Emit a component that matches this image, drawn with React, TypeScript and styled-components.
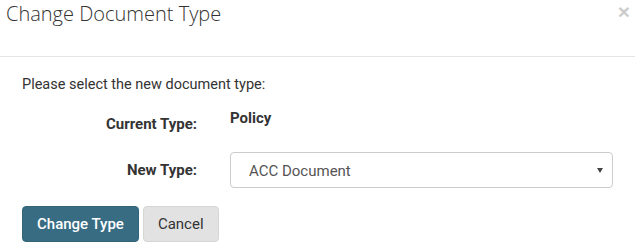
import styled, { createGlobalStyle } from 'styled-components'

const GlobalStyle = createGlobalStyle`
  html, body {
    margin: 0;
    padding: 0;
    background: #fff;
  }
  body {
    font-family: Roboto, 'Liberation Sans', sans-serif;
    font-size: 14px;
    line-height: 20px;
    color: #333;
  }
`

const Modal = styled.div`
  width: 635px;
  height: 252px;
  background: #fff;
  overflow: hidden;
`

const Header = styled.div`
  position: relative;
  height: 57px;
  border-bottom: 1px solid #e5e5e5;
  padding: 2px 6px 0;
  box-sizing: border-box;
`

const Title = styled.h4`
  margin: 0;
  font-family: 'Open Sans', sans-serif;
  font-weight: 300;
  font-size: 20px;
  line-height: 24px;
  color: #333;
`

const Close = styled.button`
  position: absolute;
  top: 1px;
  right: 5px;
  border: 0;
  background: none;
  padding: 0;
  font-family: 'Liberation Sans', Arial, sans-serif;
  font-size: 21px;
  font-weight: bold;
  line-height: 21px;
  color: #000;
  opacity: 0.2;
  cursor: pointer;
`

const Body = styled.div`
  padding: 18px 22px 0;
`

const Intro = styled.p`
  margin: 0 0 13px;
  font-size: 14.5px;
`

const Form = styled.div`
  display: grid;
  grid-template-columns: 175px 1fr;
  column-gap: 33px;
  row-gap: 17px;
  align-items: start;
`

const Label = styled.div<{ $pad?: number }>`
  font-size: 15px;
  font-weight: 700;
  text-align: right;
  padding-top: ${(p) => p.$pad ?? 0}px;
  line-height: 20px;
`

const Static = styled.div`
  font-size: 15px;
  font-weight: 700;
`

const SelectWrap = styled.div`
  position: relative;
  height: 36px;
  margin-top: 1px;
  border: 1px solid #ccc;
  border-radius: 4px;
  box-sizing: border-box;
  display: flex;
  align-items: center;
  padding: 2px 18px 0;
  font-size: 15px;
  color: #555;
`

const Caret = styled.span`
  position: absolute;
  right: 9px;
  top: 15px;
  width: 0;
  height: 0;
  border-left: 3px solid transparent;
  border-right: 3px solid transparent;
  border-top: 5px solid #444;
`

const Actions = styled.div`
  display: flex;
  gap: 4px;
  margin-top: 18px;
`

const Button = styled.button<{ $primary?: boolean }>`
  height: 36px;
  padding: 0 14px;
  border-radius: 4px;
  font-family: Roboto, 'Liberation Sans', sans-serif;
  font-size: 15px;
  font-weight: ${(p) => (p.$primary ? 500 : 400)};
  border: 1px solid ${(p) => (p.$primary ? '#33657b' : '#d6d6d6')};
  background: ${(p) => (p.$primary ? '#386c83' : '#e2e2e2')};
  color: ${(p) => (p.$primary ? '#fff' : '#333')};
  cursor: pointer;
`

export default function App() {
  return (
    <Modal>
      <GlobalStyle />
      <Header>
        <Title>Change Document Type</Title>
        <Close>×</Close>
      </Header>
      <Body>
        <Intro>Please select the new document type:</Intro>
        <Form>
          <Label $pad={6}>Current Type:</Label>
          <Static>Policy</Static>
          <Label $pad={9}>New Type:</Label>
          <SelectWrap>
            ACC Document
            <Caret />
          </SelectWrap>
        </Form>
        <Actions>
          <Button $primary>Change Type</Button>
          <Button>Cancel</Button>
        </Actions>
      </Body>
    </Modal>
  )
}
